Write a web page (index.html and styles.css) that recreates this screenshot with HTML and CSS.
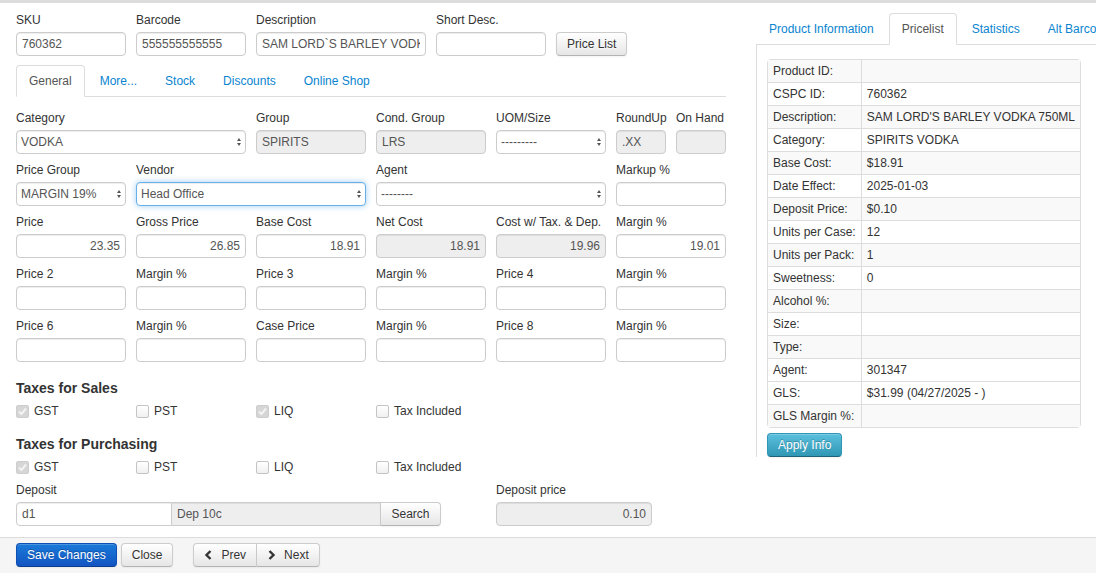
FILE: index.html
```html
<!DOCTYPE html>
<html lang="en">
<head>
    <meta charset="UTF-8">
    <title>Product</title>
    <link rel="stylesheet" href="styles.css">
</head>
<body>
    <div class="topbar"></div>
    <div class="page">
        <!-- left: product form -->
        <div class="main">
            <div class="grid">
                <div class="field s2"><label>SKU</label><input type="text" value="760362"></div>
                <div class="field s2"><label>Barcode</label><input type="text" value="555555555555"></div>
                <div class="field s3"><label>Description</label><input type="text" value="SAM LORD`S BARLEY VODKA 750ML"></div>
                <div class="field s2"><label>Short Desc.</label><input type="text"></div>
                <div class="field s3"><label>&nbsp;</label><div><button class="btn">Price List</button></div></div>
            </div>

            <ul class="tabs main-tabs">
                <li class="active"><a>General</a></li>
                <li><a>More...</a></li>
                <li><a>Stock</a></li>
                <li><a>Discounts</a></li>
                <li><a>Online Shop</a></li>
            </ul>

            <div class="grid form-grid">
                <div class="field s4"><label>Category</label>
                    <div class="sel"><select><option>VODKA</option></select></div></div>
                <div class="field s2"><label>Group</label><input type="text" value="SPIRITS" disabled></div>
                <div class="field s2"><label>Cond. Group</label><input type="text" value="LRS" disabled></div>
                <div class="field s2"><label>UOM/Size</label>
                    <div class="sel"><select><option>---------</option></select></div></div>
                <div class="field s1"><label>RoundUp</label><input type="text" value=".XX" disabled></div>
                <div class="field s1"><label>On Hand</label><input type="text" disabled></div>

                <div class="field s2"><label>Price Group</label>
                    <div class="sel"><select><option>MARGIN 19%</option></select></div></div>
                <div class="field s4"><label>Vendor</label>
                    <div class="sel"><select class="focus"><option>Head Office</option></select></div></div>
                <div class="field s4"><label>Agent</label>
                    <div class="sel"><select><option>--------</option></select></div></div>
                <div class="field s2"><label>Markup %</label><input type="text"></div>

                <div class="field s2"><label>Price</label><input type="text" class="num" value="23.35"></div>
                <div class="field s2"><label>Gross Price</label><input type="text" class="num" value="26.85"></div>
                <div class="field s2"><label>Base Cost</label><input type="text" class="num" value="18.91"></div>
                <div class="field s2"><label>Net Cost</label><input type="text" class="num" value="18.91" disabled></div>
                <div class="field s2"><label>Cost w/ Tax. &amp; Dep.</label><input type="text" class="num" value="19.96" disabled></div>
                <div class="field s2"><label>Margin %</label><input type="text" class="num" value="19.01"></div>

                <div class="field s2"><label>Price 2</label><input type="text"></div>
                <div class="field s2"><label>Margin %</label><input type="text"></div>
                <div class="field s2"><label>Price 3</label><input type="text"></div>
                <div class="field s2"><label>Margin %</label><input type="text"></div>
                <div class="field s2"><label>Price 4</label><input type="text"></div>
                <div class="field s2"><label>Margin %</label><input type="text"></div>

                <div class="field s2"><label>Price 6</label><input type="text"></div>
                <div class="field s2"><label>Margin %</label><input type="text"></div>
                <div class="field s2"><label>Case Price</label><input type="text"></div>
                <div class="field s2"><label>Margin %</label><input type="text"></div>
                <div class="field s2"><label>Price 8</label><input type="text"></div>
                <div class="field s2"><label>Margin %</label><input type="text"></div>
            </div>

            <h4 class="section">Taxes for Sales</h4>
            <div class="grid checks">
                <label class="chk s2"><span class="box on"><svg width="11" height="11" viewBox="0 0 11 11"><path d="M2 5.5 L4.5 8 L9 2.5" fill="none" stroke="#f4f4f4" stroke-width="2"/></svg></span>GST</label>
                <label class="chk s2"><span class="box"></span>PST</label>
                <label class="chk s2"><span class="box on"><svg width="11" height="11" viewBox="0 0 11 11"><path d="M2 5.5 L4.5 8 L9 2.5" fill="none" stroke="#f4f4f4" stroke-width="2"/></svg></span>LIQ</label>
                <label class="chk s2"><span class="box"></span>Tax Included</label>
            </div>

            <h4 class="section">Taxes for Purchasing</h4>
            <div class="grid checks">
                <label class="chk s2"><span class="box on"><svg width="11" height="11" viewBox="0 0 11 11"><path d="M2 5.5 L4.5 8 L9 2.5" fill="none" stroke="#f4f4f4" stroke-width="2"/></svg></span>GST</label>
                <label class="chk s2"><span class="box"></span>PST</label>
                <label class="chk s2"><span class="box"></span>LIQ</label>
                <label class="chk s2"><span class="box"></span>Tax Included</label>
            </div>

            <div class="deposit-row">
                <div class="field dep-field"><label>Deposit</label>
                    <div class="dep-group">
                        <input type="text" class="dep-code" value="d1">
                        <input type="text" class="dep-name" value="Dep 10c" disabled>
                        <button class="btn dep-btn">Search</button>
                    </div>
                </div>
                <div class="field dep-price"><label>Deposit price</label><input type="text" class="num" value="0.10" disabled></div>
            </div>
        </div>

        <!-- right: pricelist info -->
        <div class="side">
            <ul class="tabs side-tabs">
                <li><a>Product Information</a></li>
                <li class="active"><a>Pricelist</a></li>
                <li><a>Statistics</a></li>
                <li><a>Alt Barcodes</a></li>
            </ul>
            <div class="pane">
                <table class="info">
                    <tr class="odd"><td>Product ID:</td><td></td></tr>
                    <tr><td>CSPC ID:</td><td>760362</td></tr>
                    <tr class="odd"><td>Description:</td><td>SAM LORD'S BARLEY VODKA 750ML</td></tr>
                    <tr><td>Category:</td><td>SPIRITS VODKA</td></tr>
                    <tr class="odd"><td>Base Cost:</td><td>$18.91</td></tr>
                    <tr><td>Date Effect:</td><td>2025-01-03</td></tr>
                    <tr class="odd"><td>Deposit Price:</td><td>$0.10</td></tr>
                    <tr><td>Units per Case:</td><td>12</td></tr>
                    <tr class="odd"><td>Units per Pack:</td><td>1</td></tr>
                    <tr><td>Sweetness:</td><td>0</td></tr>
                    <tr class="odd"><td>Alcohol %:</td><td></td></tr>
                    <tr><td>Size:</td><td></td></tr>
                    <tr class="odd"><td>Type:</td><td></td></tr>
                    <tr><td>Agent:</td><td>301347</td></tr>
                    <tr><td>GLS:</td><td>$31.99 (04/27/2025 - )</td></tr>
                    <tr class="odd"><td>GLS Margin %:</td><td></td></tr>
                </table>
                <button class="btn btn-info">Apply Info</button>
            </div>
        </div>
    </div>

    <div class="footer">
        <button class="btn btn-primary">Save Changes</button>
        <button class="btn">Close</button>
        <div class="btn-group">
            <button class="btn"><svg width="9" height="10" viewBox="0 0 9 10"><path d="M6.5 1 L2.5 5 L6.5 9" fill="none" stroke="#333" stroke-width="2.4"/></svg>Prev</button><button class="btn"><svg width="9" height="10" viewBox="0 0 9 10"><path d="M2.5 1 L6.5 5 L2.5 9" fill="none" stroke="#333" stroke-width="2.4"/></svg>Next</button>
        </div>
    </div>
</body>
</html>
```

FILE: styles.css
```css
* {
    box-sizing: border-box;
}

html, body {
    margin: 0;
    padding: 0;
    overflow: hidden;
}

body {
    font-family: "Liberation Sans", Arial, sans-serif;
    font-size: 12px;
    line-height: 16px;
    color: #333;
    background: #fff;
    width: 1096px;
    height: 573px;
}

.topbar {
    height: 3px;
    background: #dcdcdc;
}

.page {
    display: flex;
    height: 534px;
}

.main {
    width: 756px;
    flex-shrink: 0;
    padding: 8px 0 0 16px;
}

.grid {
    display: grid;
    grid-template-columns: repeat(12, 50px);
    column-gap: 10px;
    width: 710px;
}

.s1 { grid-column: span 1; }
.s2 { grid-column: span 2; }
.s3 { grid-column: span 3; }
.s4 { grid-column: span 4; }

.field label {
    display: block;
    height: 17px;
    line-height: 18px;
    margin-bottom: 4px;
    white-space: nowrap;
}

input[type="text"], select {
    display: block;
    width: 100%;
    height: 24px;
    margin: 0;
    padding: 0 5px;
    font: inherit;
    color: #555;
    background: #fff;
    border: 1px solid #ccc;
    border-radius: 4px;
    box-shadow: inset 0 1px 1px rgba(0,0,0,0.075);
    outline: none;
}

input:disabled {
    background: #eee;
    color: #555;
}

input.num {
    text-align: right;
}

select {
    -webkit-appearance: none;
    appearance: none;
    padding: 0 16px 0 4px;
}

select.focus {
    border-color: #66afe9;
    box-shadow: inset 0 1px 1px rgba(0,0,0,0.075), 0 0 6px rgba(102,175,233,0.6);
}

.sel {
    position: relative;
}

/* up/down arrows of the select */
.sel::before,
.sel::after {
    content: "";
    position: absolute;
    right: 5px;
    width: 0;
    height: 0;
    border-left: 2px solid transparent;
    border-right: 2px solid transparent;
}

.sel::before {
    top: 8px;
    border-bottom: 3px solid #555;
}

.sel::after {
    top: 13px;
    border-top: 3px solid #555;
}

.btn {
    display: inline-block;
    height: 24px;
    padding: 3px 10px;
    margin: 0;
    font: inherit;
    line-height: 16px;
    color: #333;
    text-shadow: 0 1px 1px rgba(255,255,255,0.75);
    background: linear-gradient(#fff, #e6e6e6);
    border: 1px solid #ccc;
    border-bottom-color: #b3b3b3;
    border-radius: 4px;
    box-shadow: inset 0 1px 0 rgba(255,255,255,0.2), 0 1px 2px rgba(0,0,0,0.05);
    cursor: pointer;
    vertical-align: top;
}

.btn-primary {
    color: #fff;
    text-shadow: 0 -1px 0 rgba(0,0,0,0.25);
    background: linear-gradient(#1a7ad8, #1254c2);
    border-color: #0e4fb5 #0e4fb5 #0a3d8e;
}

.btn-info {
    color: #fff;
    text-shadow: 0 -1px 0 rgba(0,0,0,0.25);
    background: linear-gradient(#5bc0de, #2f96b4);
    border-color: #2f96b4 #2f96b4 #1f6377;
}

.btn svg {
    margin-right: 8px;
    vertical-align: -1px;
}

/* tabs */
.tabs {
    display: flex;
    list-style: none;
    margin: 0;
    padding: 0;
    border-bottom: 1px solid #ddd;
    white-space: nowrap;
}

.tabs li {
    margin-bottom: -1px;
    margin-right: 2px;
}

.tabs a {
    display: block;
    padding: 8px 12px;
    line-height: 14px;
    color: #0a84d0;
    border: 1px solid transparent;
    border-radius: 4px 4px 0 0;
    cursor: pointer;
}

.tabs .active a {
    color: #555;
    background: #fff;
    border-color: #ddd #ddd transparent;
}

.main-tabs {
    width: 710px;
    margin-top: 9px;
}

.form-grid {
    margin-top: 12px;
    row-gap: 7px;
}

.section {
    margin: 18px 0 7px;
    font-size: 14px;
    line-height: 17px;
    height: 16px;
    font-weight: bold;
}

.checks + .section {
    margin-top: 17px;
}

.chk {
    display: flex;
    align-items: center;
    height: 16px;
    white-space: nowrap;
}

.box {
    display: inline-flex;
    align-items: center;
    justify-content: center;
    width: 13px;
    height: 13px;
    margin-right: 5px;
    border: 1px solid #c4c4c4;
    border-radius: 2px;
    background: linear-gradient(#fff, #f0f0f0);
}

.box.on {
    background: #d6d6d6;
    border-color: #cdcdcd;
}

/* deposit */
.deposit-row {
    display: flex;
    margin-top: 6px;
}

.dep-field {
    width: 425px;
    margin-right: 55px;
}

.dep-group {
    display: flex;
}

.dep-code {
    width: 156px !important;
    border-radius: 4px 0 0 4px !important;
}

.dep-name {
    width: 209px !important;
    border-radius: 0 !important;
    border-left: 0 !important;
}

.dep-btn {
    width: 60px;
    padding: 3px 0;
    border-radius: 0 4px 4px 0;
    border-left: 0;
}

.dep-price {
    width: 156px;
}

/* right side */
.side {
    flex: 1;
    min-width: 0;
    padding-top: 10px;
    overflow: hidden;
}

.side-tabs a {
    padding: 8px 12px;
}

.pane {
    border-left: 1px solid #ddd;
    padding: 14px 10px 0;
}

.info {
    width: 314px;
    border-collapse: separate;
    border-spacing: 0;
    border: 1px solid #ddd;
    border-radius: 4px;
    margin-bottom: 5px;
}

.info td {
    height: 22px;
    padding: 3px 5px;
    border-top: 1px solid #ddd;
    white-space: nowrap;
    vertical-align: middle;
}

.info tr:first-child td {
    border-top: 0;
}

.info td:first-child {
    width: 95px;
    border-right: 1px solid #ddd;
}

.info tr.odd td {
    background: #f9f9f9;
}

.btn-info {
    padding: 3px 10px;
}

/* footer */
.footer {
    border-top: 1px solid #ddd;
    background: #f5f5f5;
    height: 40px;
    padding: 5px 16px;
    display: flex;
    align-items: flex-start;
}

.footer .btn + .btn {
    margin-left: 4px;
}

.btn-group {
    display: flex;
    margin-left: 20px;
}

.btn-group .btn {
    margin: 0 !important;
}

.btn-group .btn:first-child {
    border-radius: 4px 0 0 4px;
}

.btn-group .btn:last-child {
    border-radius: 0 4px 4px 0;
    border-left: 0;
}
```
